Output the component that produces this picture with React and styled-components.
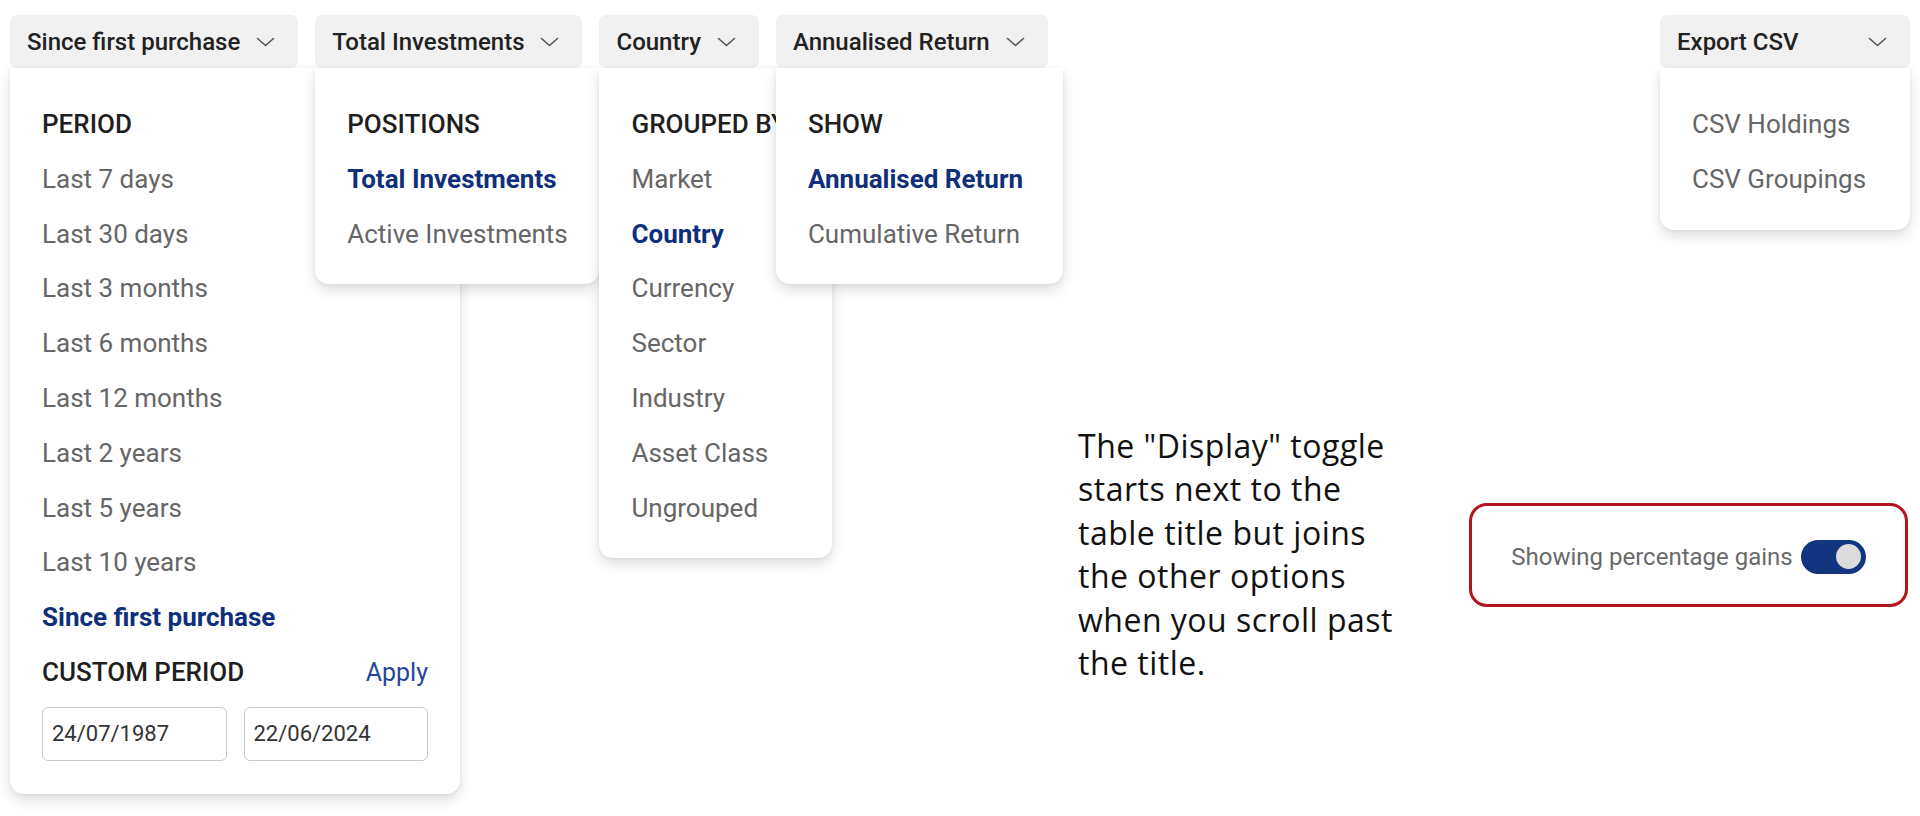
import React from 'react';
import styled, { createGlobalStyle } from 'styled-components';

const GlobalStyle = createGlobalStyle`
    body {
        margin: 0;
        background: #ffffff;
        font-family: Roboto, "Liberation Sans", sans-serif;
    }
`;

const navy = '#0f2f7c';

const Page = styled.div`
    width: 1920px;
    height: 816px;
    overflow: hidden;
`;

const Toolbar = styled.div`
    display: flex;
    align-items: flex-start;
    gap: 17px;
    padding: 15px 10px 0;
`;

const Spacer = styled.div`
    flex: 1;
`;

const DropdownWrap = styled.div`
    position: relative;
`;

const Trigger = styled.button`
    display: flex;
    align-items: center;
    justify-content: space-between;
    gap: 16px;
    box-sizing: border-box;
    width: ${p => (p.$width ? `${p.$width}px` : 'auto')};
    height: 53px;
    padding: 0 23px 0 17px;
    border: none;
    border-radius: 7px;
    background: #f1f1f1;
    font-family: Roboto, sans-serif;
    font-size: 24px;
    font-weight: 500;
    color: #222222;
    white-space: nowrap;
`;

const Panel = styled.div`
    position: absolute;
    top: 100%;
    left: 0;
    box-sizing: border-box;
    width: ${p => p.$width}px;
    padding: 29px 32px ${p => p.$padBottom || 23}px;
    background: #ffffff;
    border-radius: 0 0 14px 14px;
    box-shadow: 0 6px 14px rgba(0, 0, 0, 0.13), 0 1px 4px rgba(0, 0, 0, 0.06);
`;

const Heading = styled.div`
    line-height: 54.8px;
    font-size: 26px;
    font-weight: 500;
    color: #1f1f1f;
    white-space: nowrap;
`;

const Item = styled.div`
    line-height: 54.8px;
    font-size: 26px;
    font-weight: ${p => (p.$active ? 700 : 400)};
    color: ${p => (p.$active ? navy : '#666666')};
    white-space: nowrap;
`;

const CustomRow = styled.div`
    display: flex;
    align-items: center;
    justify-content: space-between;
    height: 54.8px;
`;

const ApplyLink = styled.span`
    font-size: 25px;
    color: #27479a;
`;

const DateRow = styled.div`
    display: grid;
    grid-template-columns: 1fr 1fr;
    gap: 17px;
    margin-top: 7px;
`;

const DateInput = styled.input`
    box-sizing: border-box;
    width: 100%;
    height: 54px;
    padding: 0 9px;
    border: 1px solid #cccccc;
    border-radius: 6px;
    font-family: Roboto, sans-serif;
    font-size: 22px;
    color: #333333;
    outline: none;
`;

const Content = styled.div`
    display: flex;
    justify-content: flex-end;
    align-items: center;
    margin-top: 356px;
    padding-right: 12px;
`;

const Note = styled.p`
    width: 391px;
    margin: 0;
    font-family: "Open Sans", "Noto Sans", sans-serif;
    font-size: 32px;
    line-height: 43.4px;
    letter-spacing: 0.5px;
    color: #111111;
`;

const HighlightBox = styled.div`
    display: flex;
    align-items: center;
    justify-content: center;
    gap: 8px;
    box-sizing: border-box;
    width: 439px;
    height: 104px;
    margin-top: 2px;
    padding-top: 3px;
    border: 3px solid #b3141c;
    border-radius: 18px;
`;

const ToggleLabel = styled.span`
    font-size: 24px;
    color: #6a6a6a;
`;

const Toggle = styled.div`
    display: flex;
    align-items: center;
    justify-content: ${p => (p.$on ? 'flex-end' : 'flex-start')};
    box-sizing: border-box;
    width: 65px;
    height: 34px;
    padding: 0 5px;
    border-radius: 17px;
    background: ${p => (p.$on ? '#11357f' : '#bbbbbb')};
`;

const Knob = styled.div`
    width: 25px;
    height: 25px;
    border-radius: 50%;
    background: #dcdcdc;
`;

const Chevron = () => (
    <svg width="19" height="10" viewBox="0 0 19 10" fill="none">
        <polyline points="1.5,1.5 9.5,8.5 17.5,1.5" stroke="#555" strokeWidth="1.6" strokeLinecap="round" strokeLinejoin="round" />
    </svg>
);

const menus = [
    {
        label: 'Since first purchase',
        width: 450,
        heading: 'PERIOD',
        items: [
            'Last 7 days',
            'Last 30 days',
            'Last 3 months',
            'Last 6 months',
            'Last 12 months',
            'Last 2 years',
            'Last 5 years',
            'Last 10 years',
            'Since first purchase',
        ],
        custom: true,
    },
    {
        label: 'Total Investments',
        width: 284,
        heading: 'POSITIONS',
        items: ['Total Investments', 'Active Investments'],
    },
    {
        label: 'Country',
        width: 233,
        heading: 'GROUPED BY',
        items: ['Market', 'Country', 'Currency', 'Sector', 'Industry', 'Asset Class', 'Ungrouped'],
    },
    {
        label: 'Annualised Return',
        width: 287,
        heading: 'SHOW',
        items: ['Annualised Return', 'Cumulative Return'],
    },
];

const Dropdown = ({ menu, triggerWidth }) => (
    <DropdownWrap>
        <Trigger $width={triggerWidth}>
            {menu.label}
            <Chevron />
        </Trigger>
        <Panel $width={menu.width} $padBottom={menu.custom ? 33 : 23}>
            {menu.heading && <Heading>{menu.heading}</Heading>}
            {menu.items.map(item => (
                <Item key={item} $active={item === menu.label}>{item}</Item>
            ))}
            {menu.custom && (
                <>
                    <CustomRow>
                        <Heading>CUSTOM PERIOD</Heading>
                        <ApplyLink>Apply</ApplyLink>
                    </CustomRow>
                    <DateRow>
                        <DateInput readOnly value="24/07/1987" />
                        <DateInput readOnly value="22/06/2024" />
                    </DateRow>
                </>
            )}
        </Panel>
    </DropdownWrap>
);

const exportMenu = {
    label: 'Export CSV',
    width: 250,
    items: ['CSV Holdings', 'CSV Groupings'],
};

const App = () => {
    return (
        <Page>
            <GlobalStyle />
            <Toolbar>
                {menus.map(menu => (
                    <Dropdown key={menu.label} menu={menu} />
                ))}
                <Spacer />
                <Dropdown menu={exportMenu} triggerWidth={250} />
            </Toolbar>
            <Content>
                <Note>
                    The "Display" toggle<br />
                    starts next to the<br />
                    table title but joins<br />
                    the other options<br />
                    when you scroll past<br />
                    the title.
                </Note>
                <HighlightBox>
                    <ToggleLabel>Showing percentage gains</ToggleLabel>
                    <Toggle $on>
                        <Knob />
                    </Toggle>
                </HighlightBox>
            </Content>
        </Page>
    );
};

export default App;
